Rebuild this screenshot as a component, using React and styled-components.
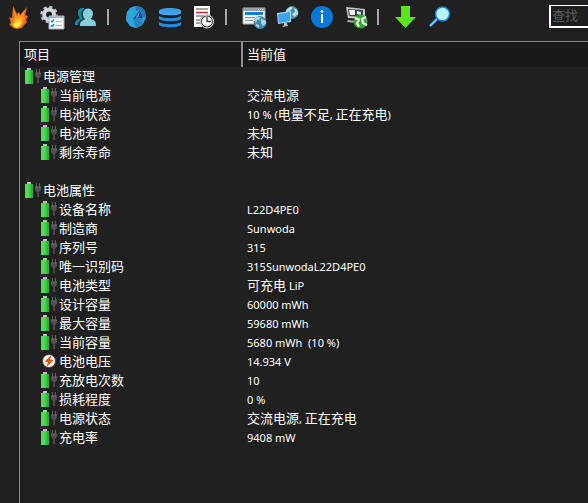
import React from "react";
import styled, { createGlobalStyle } from "styled-components";

const GlobalStyle = createGlobalStyle`
  *, *::before, *::after { box-sizing: border-box; }
  html, body, #root { height: 100%; }
  body {
    margin: 0;
    background: #202020;
    color: #fff;
    font: 13px/18px "Noto Sans CJK SC", sans-serif;
  }
`;

const Window = styled.div`
  display: flex;
  flex-direction: column;
  min-height: 100%;
  overflow: hidden;
`;

const Toolbar = styled.div`
  display: flex;
  align-items: center;
  height: 34px;
  padding-left: 7px;
  overflow: hidden;
`;

const ToolGroup = styled.div`
  display: flex;
  flex: none;
  gap: 12px;
`;

const ToolButton = styled.button`
  display: block;
  width: 22px;
  height: 24px;
  padding: 0;
  border: 0;
  background: none;
  svg { display: block; width: 22px; height: 24px; overflow: visible; }
`;

const Separator = styled.div`
  flex: none;
  width: 2px;
  height: 16px;
  margin: 0 16px 0 10px;
  background: #a6a6a6;
`;

const SearchInput = styled.input`
  flex: none;
  align-self: flex-start;
  width: 120px;
  height: 23px;
  margin: 5px -81px 0 auto;
  padding: 0 1px 3px;
  border: 2px solid #fff;
  border-top-width: 1px;
  border-radius: 0;
  background: #1e1e1e;
  color: #fff;
  font: inherit;
  outline: 0;
  &::placeholder { color: #5c5c5c; opacity: 1; }
`;

const Panel = styled.main`
  flex: 1;
  margin: 7px 0 0 19px;
  border: 1px solid #85858a;
  border-width: 1px 0 0 1px;
`;

const Table = styled.table`
  width: 100%;
  table-layout: fixed;
  border-collapse: separate;
  border-spacing: 0;
`;

const NameColumn = styled.col`
  width: 221px;
`;

const HeadCell = styled.th`
  height: 25px;
  padding: 0 4px 2px;
  background: #191919;
  border-left: ${(p) => (p.$divided ? "2px solid #8f8f8f" : "0")};
  font-weight: 400;
  text-align: left;
`;

const NameCell = styled.th`
  height: 19px;
  padding: 0 0 1px ${(p) => (p.$level ? 20 : 4)}px;
  font-weight: 400;
  text-align: left;
  white-space: nowrap;
`;

const ValueCell = styled.td`
  height: 19px;
  padding: 0 0 1px 6px;
  white-space: pre;
`;

const Label = styled.div`
  display: flex;
  align-items: center;
  gap: 2px;
  svg { flex: none; width: 17px; height: 16px; }
`;

const Latin = styled.span`
  font-family: "Noto Sans", sans-serif;
  font-size: 11px;
  line-height: 1;
`;

const Battery = () => (
  <svg viewBox="0 0 17 16" aria-hidden="true">
    <path d="M3 0h4v2H3z" fill="#bdbdbd" />
    <path d="M1 2h8v14H1z" fill="#2fad3a" />
    <path d="M1 2h4v14H1z" fill="#58d955" />
    <path d="M5 2h2v14H5z" fill="#3ec64a" />
    <path d="M12 1h1v4h-1zM15 1h1v4h-1z" fill="#606060" />
    <path d="M11 5h6v3l-2 2h-2l-2-2z" fill="#505050" />
    <path d="M13 10h2v5h-2z" fill="#484848" />
    <path d="M11 5h6" stroke="#6c6c6c" />
  </svg>
);

const Voltage = () => (
  <svg viewBox="0 0 17 16" aria-hidden="true">
    <circle cx="9" cy="8" r="6.500" fill="#f5f2ef" stroke="#5a4a42" />
    <path d="M11.500 2 4.500 8.500l3.500.5L6.500 14l7-7-3.500-.5z" fill="#d85a0c" />
  </svg>
);

const icons = {
  flame: (
    <>
      <path d="M6 1l4 8 2-2 1 3 7-8-2 8 3 1-2 4 1 2-3 3-2 3-5 1-4-1-4-4 2-1-2-6 3 1z" fill="#ee6a1c" />
      <path d="M7 5l3 7 2-4 1 4 5-7-2 7 2 1-2 3 0 3-4 4-4-1-4-4 3-1-2-4 3 1z" fill="#ff9a20" />
      <path d="M8 13l3 2 3-3 0 4 2 0-3 5-3 2-5-3 3-2z" fill="#ffc42c" />
      <path d="M6 20l3-3 2 1 2-2-1 5-3 2z" fill="#fff03c" />
    </>
  ),
  settings: (
    <>
      <circle cx="8" cy="9.500" r="5" fill="none" stroke="#cfd6dc" strokeWidth="4" />
      <circle cx="8" cy="9.500" r="7.500" fill="none" stroke="#b9c2ca" strokeWidth="2.500" strokeDasharray="3.200 2.690" />
      <path d="M8 11h15v13H8z" fill="#f4f6f8" stroke="#a4acb4" />
      <path d="M8 11h15v2H8z" fill="#aab4bd" />
      <path d="M10 16l1 1 2-2.500M10 20.500l1 1 2-2.500" fill="none" stroke="#1683e0" strokeWidth="1.300" />
      <path d="M15 16.500h6M15 20.500h6" stroke="#b9bec3" />
    </>
  ),
  people: (
    <>
      <path d="M0 20c0-5 2-5 5-7-3-3-3-10 2-10 3 0 4 2 4 5l-4 12z" fill="#128aa3" />
      <path d="M3 21c0-5 2-6 5-7-3-4-2-11 4-11l2 6-6 12z" fill="#142a33" />
      <path d="M5 21c0-5 2-5 5-7-4-4-2-10.500 3-10.500S20 10 15.500 14c4 1 5.500 2 5.500 7z" fill="#85cedd" />
    </>
  ),
  sphere: (
    <>
      <path d="M10 1l6 1 4 4 1 7-4 7-6 3-6-2-4-6 1-8 3-4z" fill="#25a7df" />
      <path d="M10 1l6 1 4 4 1 7-3-1-2-7-5 1z" fill="#2578b8" />
      <path d="M15 5l-7 9 10-1z" fill="#17478e" />
      <path d="M14.500 7l-4 6 3-1z" fill="#5cb6e5" />
      <path d="M2 7l6-3 0 10 9-1 3 1-3 6-6 3-6-2-4-6z" fill="#27a9dc" />
      <path d="M8 14l10-1-1 6-6 4z" fill="#2085c4" />
    </>
  ),
  database: (
    <>
      <path d="M0 6c0-4 22-4 22 0v2c0 3-22 3-22 0z" fill="#42a5ef" />
      <path d="M0 11c5 3 17 3 22 0v3c-2 3-20 3-22 0zM0 17c5 3 17 3 22 0v3c-2 3-20 3-22 0z" fill="#218cdf" />
      <ellipse cx="11" cy="6" rx="10" ry="2" fill="#389fe9" />
    </>
  ),
  report: (
    <>
      <path d="M1 1h16v21H1z" fill="#fff" />
      <path d="M3 4h12M3 11h10M3 15h5M3 18h5" stroke="#888" strokeWidth="1.300" />
      <path d="M3 7.500h12" stroke="#d12a31" strokeWidth="1.500" />
      <circle cx="14" cy="16.500" r="6" fill="#fff" stroke="#333" strokeWidth="2" />
      <circle cx="14" cy="16.500" r="6.500" fill="none" stroke="#eee" />
      <path d="M14 12v4.500h4" fill="none" stroke="#333" strokeWidth="1.300" />
    </>
  ),
  webpage: (
    <>
      <path d="M0 3h22v16H0z" fill="#f1f4f7" stroke="#a7adb2" />
      <path d="M0 3h22v3H0z" fill="#98a2ac" />
      <path d="M15 4.500h1m1 0h1m1 0h1" stroke="#fff" />
      <path d="M2 8.500h18" stroke="#1680ce" strokeWidth="3" />
      <path d="M2 12.500h10M2 15.500h8" stroke="#8d969e" />
      <circle cx="17" cy="17.500" r="6.500" fill="#4389af" />
      <path d="M11 15l3-3 4 0-2 3-2 0-1 3zM18 14l4 1 1 3-3 3-2-3zM13 19l3 1 0 3-3-2z" fill="#a7d6dc" />
    </>
  ),
  network: (
    <>
      <circle cx="15" cy="7.500" r="6.500" fill="#4d8fac" />
      <path d="M9 5l4-3 3 0-2 3-4 2zM17 3l3 2 1 4-4 3-2-3 3-2z" fill="#badde0" />
      <path d="M0 8l14-2v11L1 19z" fill="#a6dcff" />
      <path d="M1 9l12-2v9L2 18z" fill="#3da5e8" />
      <path d="M7 18l3 0 1 3-6 1 2-2z" fill="#a9bac4" />
    </>
  ),
  info: (
    <>
      <circle cx="11" cy="12" r="11" fill="#0878d8" />
      <circle cx="11" cy="6.500" r="1.300" fill="#fff" />
      <path d="M11 9v9" stroke="#fff" strokeWidth="2" />
    </>
  ),
  remote: (
    <>
      <path d="M1 2l19 2v10L3 13z" fill="#c8c9c6" />
      <path d="M3 4l15 1v7L4 11z" fill="#384455" />
      <path d="M4 5l6 0v5L5 10zM12 6l4 1v3l-4-1z" fill="#eee" />
      <path d="M3 15l9 1v2L2 17z" fill="#aaa" />
      <circle cx="15.500" cy="16.500" r="7" fill="#32aa2d" />
      <path d="M10 13l4 1.500-2 4 2 3M21 12l-4 2 1 4 4 2" fill="none" stroke="#fff" strokeWidth="2" />
    </>
  ),
  download: <path d="M6 1h9v11h6L10.500 23 0 12h6z" fill="#58e51b" />,
  find: (
    <>
      <path d="M1 21l8-8" stroke="#2587cf" strokeWidth="3" />
      <path d="M1 21l7-7" stroke="#89d9ff" strokeWidth="1.200" />
      <circle cx="13.500" cy="9" r="7" fill="#b4f5ff" stroke="#2378d1" strokeWidth="1.600" />
    </>
  ),
};

const toolGroups = [
  [["flame", "烧录"], ["settings", "设置"], ["people", "用户"]],
  [["sphere", "内存"], ["database", "数据库"], ["report", "报告"]],
  [["webpage", "网页"], ["network", "网络"], ["info", "信息"], ["remote", "远程"]],
  [["download", "下载"], ["find", "查找"]],
];

const rows = [
  { name: "电源管理", level: 0 },
  { name: "当前电源", value: "交流电源", level: 1 },
  { name: "电池状态", value: "10 % (电量不足, 正在充电)", level: 1 },
  { name: "电池寿命", value: "未知", level: 1 },
  { name: "剩余寿命", value: "未知", level: 1 },
  null,
  { name: "电池属性", level: 0 },
  { name: "设备名称", value: "L22D4PE0", level: 1 },
  { name: "制造商", value: "Sunwoda", level: 1 },
  { name: "序列号", value: "315", level: 1 },
  { name: "唯一识别码", value: "315SunwodaL22D4PE0", level: 1 },
  { name: "电池类型", value: "可充电 LiP", level: 1 },
  { name: "设计容量", value: "60000 mWh", level: 1 },
  { name: "最大容量", value: "59680 mWh", level: 1 },
  { name: "当前容量", value: "5680 mWh  (10 %)", level: 1 },
  { name: "电池电压", value: "14.934 V", level: 1, icon: "voltage" },
  { name: "充放电次数", value: "10", level: 1 },
  { name: "损耗程度", value: "0 %", level: 1 },
  { name: "电源状态", value: "交流电源, 正在充电", level: 1 },
  { name: "充电率", value: "9408 mW", level: 1 },
];

const MixedText = ({ text = "" }) =>
  text.split(/([\x20-\x7e]+)/).map((part, i) =>
    i % 2 ? <Latin key={i}>{part}</Latin> : part
  );

export default function App() {
  return (
    <>
      <GlobalStyle />
      <Window>
        <Toolbar role="toolbar">
          {toolGroups.map((group, g) => (
            <React.Fragment key={g}>
              {g > 0 && <Separator />}
              <ToolGroup>
                {group.map(([icon, label]) => (
                  <ToolButton key={icon} type="button" aria-label={label}>
                    <svg viewBox="0 0 22 24" aria-hidden="true">{icons[icon]}</svg>
                  </ToolButton>
                ))}
              </ToolGroup>
            </React.Fragment>
          ))}
          <SearchInput type="text" placeholder="查找" aria-label="查找" />
        </Toolbar>
        <Panel>
          <Table>
            <colgroup>
              <NameColumn />
              <col />
            </colgroup>
            <thead>
              <tr>
                <HeadCell scope="col">项目</HeadCell>
                <HeadCell scope="col" $divided>当前值</HeadCell>
              </tr>
            </thead>
            <tbody>
              {rows.map((row, i) => (
                <tr key={i}>
                  {row ? (
                    <>
                      <NameCell scope="row" $level={row.level}>
                        <Label>
                          {row.icon === "voltage" ? <Voltage /> : <Battery />}
                          {row.name}
                        </Label>
                      </NameCell>
                      <ValueCell><MixedText text={row.value} /></ValueCell>
                    </>
                  ) : (
                    <ValueCell colSpan={2} />
                  )}
                </tr>
              ))}
            </tbody>
          </Table>
        </Panel>
      </Window>
    </>
  );
}
